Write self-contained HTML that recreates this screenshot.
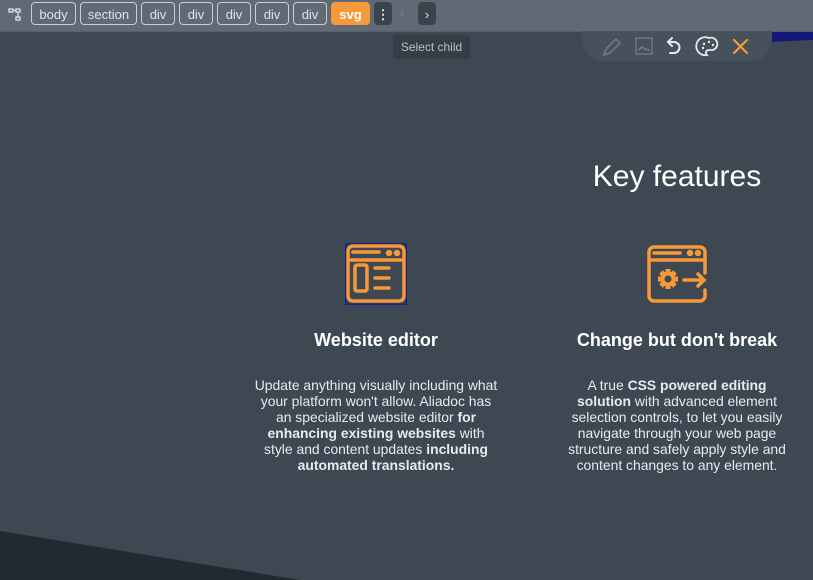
<!DOCTYPE html>
<html><head><style>
body{margin:0;width:813px;height:580px;overflow:hidden;background:#3e4852;font-family:"Liberation Sans",sans-serif;position:relative;color:#fff}
.bar{position:absolute;left:0;top:0;width:813px;height:31px;background:#5f6a75;border-bottom:1px solid #56616b}
.b{position:absolute;top:2px;height:23px;border:1px solid #c9ced3;border-radius:4px;color:#dfe3e7;font-size:13px;line-height:23px;text-align:center;box-sizing:border-box}
.tip{position:absolute;left:393px;top:35px;width:77px;height:24px;background:#353d45;border-radius:3px;color:#b9bfc5;font-size:12px;line-height:24px;text-align:center}
.tool{position:absolute;left:582px;top:31px;width:190px;height:30px;background:#47515b;border-radius:0 0 22px 22px}
.c{position:absolute;text-align:center;font-size:13.9px;line-height:16px;color:#e8eaed;white-space:nowrap}
h2{position:absolute;margin:0;font-size:18px;font-weight:bold;text-align:center;color:#fff}
</style></head><body>
<svg style="position:absolute;left:0;top:0" width="813" height="580">
<polygon points="0,531 300,580 0,580" fill="#222930"/>
<polygon points="770,31 813,31 813,40 768,42" fill="#15177a"/>
</svg>
<div class="bar"></div>
<svg style="position:absolute;left:8px;top:8px" width="14" height="14" fill="none" stroke="#dfe3e7" stroke-width="1.3"><rect x="1" y="1" width="4" height="3"/><rect x="8" y="1" width="4" height="3"/><rect x="8" y="9" width="4" height="3"/><path d="M5 2.5H8M10 4V9"/></svg>
<div class="b" style="left:31px;width:45px">body</div>
<div class="b" style="left:80px;width:57px">section</div>
<div class="b" style="left:141px;width:34px">div</div>
<div class="b" style="left:179px;width:34px">div</div>
<div class="b" style="left:217px;width:34px">div</div>
<div class="b" style="left:255px;width:34px">div</div>
<div class="b" style="left:293px;width:34px">div</div>
<div class="b" style="left:331px;width:39px;background:#f7993a;border-color:#f7993a;color:#fff;font-weight:bold">svg</div>
<div class="b" style="left:374px;width:18px;background:#3b444d;border-color:#3b444d;font-weight:bold">⋮</div>
<div style="position:absolute;left:400px;top:6px;color:#7f8a94;font-size:13px">‹</div>
<div class="b" style="left:418px;width:18px;background:#3b444d;border-color:#3b444d">›</div>
<div class="tip">Select child</div>
<div class="tool"></div>
<svg style="position:absolute;left:600px;top:35px" width="160" height="24" fill="none" stroke-width="1.8" stroke-linecap="round">
<path d="M4 20L6 14L16 4L20 8L10 18Z" stroke="#6d7780"/>
<rect x="36" y="3" width="16" height="16" stroke="#6d7780" stroke-width="1.5"/><path d="M39 15L42 12L45 14L49 15" stroke="#6d7780"/>
<path d="M72 3L68 7L72 11M68 7H74A5.5 5.5 0 0 1 74 18H70" stroke="#e6e9ec" stroke-width="2"/>
<path d="M109 3A9 9 0 1 0 107 20C105 18 106 15 109 15H113A5 5 0 0 0 109 3Z" stroke="#e6e9ec"/>
<circle cx="104" cy="9" r="1.2" fill="#e6e9ec"/><circle cx="109" cy="7" r="1.2" fill="#e6e9ec"/><circle cx="113" cy="10" r="1.2" fill="#e6e9ec"/><circle cx="103" cy="13" r="1.2" fill="#e6e9ec"/>
<path d="M134 5L147 18M147 5L134 18" stroke="#f7993a" stroke-width="2.2"/>
</svg>
<div style="position:absolute;left:560px;top:160px;width:234px;text-align:center;font-size:30px;color:#fff">Key features</div>
<svg style="position:absolute;left:345px;top:243px" width="62" height="62" fill="none" stroke="#f7993a" stroke-width="3.5" stroke-linecap="round">
<rect x="0.75" y="0.75" width="60.5" height="60.5" stroke="#1b1f8a" stroke-width="1.5"/>
<path d="M59 42V53A5 5 0 0 1 54 58H8A5 5 0 0 1 3 53V8A5 5 0 0 1 8 3H54A5 5 0 0 1 59 8V42"/>
<path d="M5 17H57M8 9H34"/><circle cx="44" cy="10" r="1.5" fill="#f7993a"/><circle cx="52" cy="10" r="1.5" fill="#f7993a"/>
<rect x="10" y="22" width="12" height="26" rx="2"/><path d="M30 25H44M30 35H44M30 45H44"/>
</svg>
<svg style="position:absolute;left:646px;top:245px" width="62" height="58" fill="none" stroke="#f7993a" stroke-width="3.5" stroke-linecap="round">
<path d="M59 45V51A5 5 0 0 1 54 56H8A5 5 0 0 1 3 51V7A5 5 0 0 1 8 2H54A5 5 0 0 1 59 7V28"/>
<path d="M5 15H57M8 8H34"/><circle cx="44" cy="8" r="1.5" fill="#f7993a"/><circle cx="52" cy="8" r="1.5" fill="#f7993a"/>
<g stroke-width="5" stroke-linecap="butt"><path d="M22 24V28M22 40V44M12 34H16M28 34H32M15 27L18 30M26 38L29 41M15 41L18 38M26 30L29 27"/></g>
<circle cx="22" cy="34" r="5.5" stroke-width="4"/>
<path d="M38 35H58M52 29L58 35L52 41"/>
</svg>
<h2 style="left:250px;width:252px;top:330px">Website editor</h2>
<h2 style="left:560px;width:234px;top:330px">Change but don't break</h2>
<div class="c" style="left:226px;width:300px;top:377px">Update anything visually including what<br>your platform won't allow. Aliadoc has<br>an specialized website editor <b>for</b><br><b>enhancing existing websites</b> with<br>style and content updates <b>including</b><br><b>automated translations.</b></div>
<div class="c" style="left:527px;width:300px;top:377px">A true <b>CSS powered editing</b><br><b>solution</b> with advanced element<br>selection controls, to let you easily<br>navigate through your web page<br>structure and safely apply style and<br>content changes to any element.</div>
</body></html>
